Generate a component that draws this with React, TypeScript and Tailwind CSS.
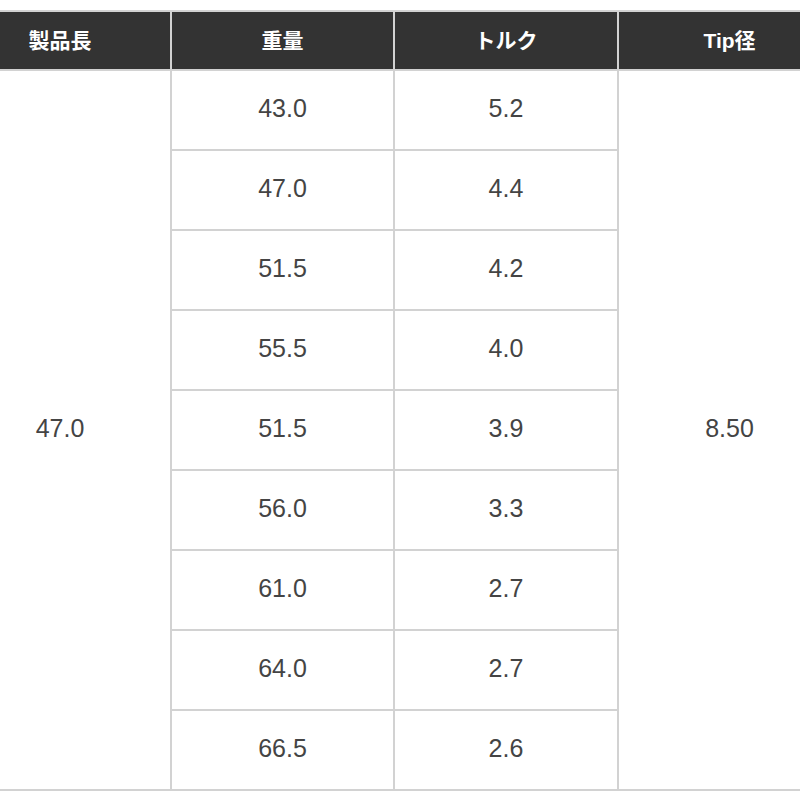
import React from 'react';

type RowType = {
    weight: string;
    torque: string;
}

const rows: RowType[] = [
    { weight: "43.0", torque: "5.2" },
    { weight: "47.0", torque: "4.4" },
    { weight: "51.5", torque: "4.2" },
    { weight: "55.5", torque: "4.0" },
    { weight: "51.5", torque: "3.9" },
    { weight: "56.0", torque: "3.3" },
    { weight: "61.0", torque: "2.7" },
    { weight: "64.0", torque: "2.7" },
    { weight: "66.5", torque: "2.6" },
];

const headers = ["製品長", "重量", "トルク", "Tip径"];

const App = () => {
    return (
        <div className="w-[800px] h-[800px] overflow-hidden bg-white">
            <table className="mt-[10px] -ml-[52px] w-[892px] table-fixed border-collapse font-['Liberation_Sans','Noto_Sans_CJK_JP',sans-serif]">
                <colgroup>
                    <col className="w-[222px]" />
                    <col className="w-[223px]" />
                    <col className="w-[224px]" />
                    <col className="w-[223px]" />
                </colgroup>
                <thead>
                    <tr className="h-[59px]">
                        {headers.map((h) => (
                            <th key={h} className="bg-[#333333] border-2 border-[#d2d2d2] text-white text-[21px] font-bold text-center align-middle font-['Liberation_Sans','Noto_Sans_CJK_JP',sans-serif]">
                                {h}
                            </th>
                        ))}
                    </tr>
                </thead>
                <tbody>
                    {rows.map((row, i) => (
                        <tr key={i} className="h-[80px]">
                            {i === 0 && (
                                <td rowSpan={rows.length} className="border-2 border-[#d2d2d2] text-center align-middle text-[25px] text-[#444444] pb-[3px]">
                                    47.0
                                </td>
                            )}
                            <td className="border-2 border-[#d2d2d2] text-center align-middle text-[25px] text-[#444444] pb-[3px]">
                                {row.weight}
                            </td>
                            <td className="border-2 border-[#d2d2d2] text-center align-middle text-[25px] text-[#444444] pb-[3px]">
                                {row.torque}
                            </td>
                            {i === 0 && (
                                <td rowSpan={rows.length} className="border-2 border-[#d2d2d2] text-center align-middle text-[25px] text-[#444444] pb-[3px]">
                                    8.50
                                </td>
                            )}
                        </tr>
                    ))}
                </tbody>
            </table>
        </div>
    );
};

export default App;
